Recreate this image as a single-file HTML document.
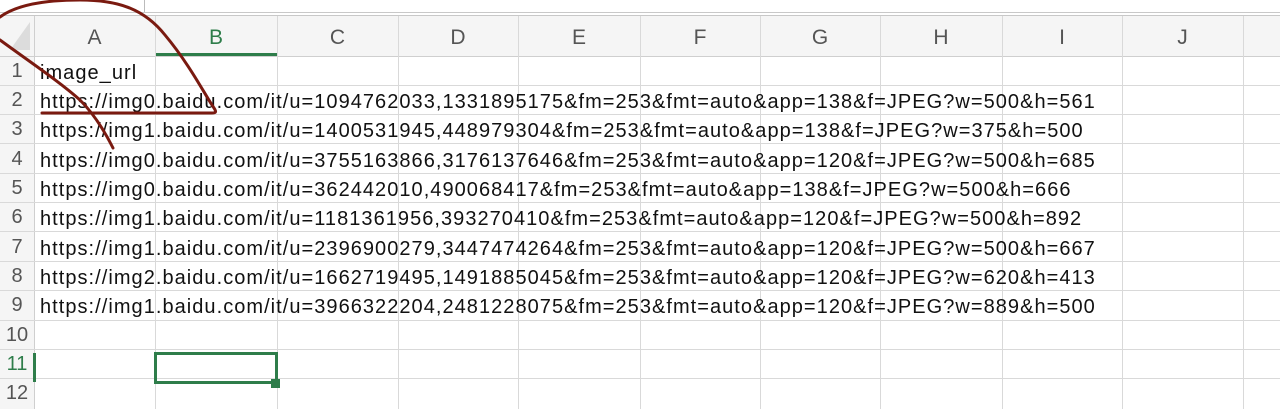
<!DOCTYPE html>
<html><head><meta charset="utf-8"><style>
body{margin:0;width:1280px;height:409px;overflow:hidden;background:#fff;font-family:"Liberation Sans",sans-serif;position:relative}
.a{position:absolute}
.vl{position:absolute;width:1px;background:#d9d9d9}
.hl{position:absolute;height:1px;background:#d9d9d9;left:0;width:1280px}
.ch{position:absolute;top:17px;height:39px;line-height:42px;text-align:center;font-size:21px;color:#555}
.rh{position:absolute;left:0;width:34px;text-align:center;font-size:20px;color:#555}
.t{position:absolute;left:40px;font-size:20px;letter-spacing:1.04px;color:#111;white-space:nowrap}
</style></head><body>
<div class="a" style="left:0;top:0;width:1280px;height:12px;background:#fff"></div>
<div class="a" style="left:144px;top:0;width:1px;height:12px;background:#bbb"></div>
<div class="a" style="left:0;top:12px;width:1280px;height:1px;background:#c8c8c8"></div>
<div class="a" style="left:0;top:15px;width:1280px;height:1px;background:#c8c8c8"></div>
<div class="a" style="left:0;top:16px;width:1280px;height:40px;background:#f5f5f5"></div>
<div class="a" style="left:0;top:56px;width:34px;height:353px;background:#f5f5f5"></div>
<svg class="a" style="left:8px;top:20px" width="24" height="32"><polygon points="22,2 22,30 2,30" fill="#dcdcdc"/></svg>
<div class="hl" style="top:56px;background:#cfcfcf"></div>
<div class="a" style="left:155px;top:53px;width:122px;height:3px;background:#2e7d4a"></div>
<div class="vl" style="left:34px;top:16px;height:393px;background:#cfcfcf"></div>
<div class="vl" style="left:155px;top:16px;height:393px"></div>
<div class="vl" style="left:277px;top:16px;height:393px"></div>
<div class="vl" style="left:398px;top:16px;height:393px"></div>
<div class="vl" style="left:518px;top:16px;height:393px"></div>
<div class="vl" style="left:640px;top:16px;height:393px"></div>
<div class="vl" style="left:760px;top:16px;height:393px"></div>
<div class="vl" style="left:880px;top:16px;height:393px"></div>
<div class="vl" style="left:1002px;top:16px;height:393px"></div>
<div class="vl" style="left:1122px;top:16px;height:393px"></div>
<div class="vl" style="left:1243px;top:16px;height:393px"></div>
<div class="ch" style="left:34px;width:121px">A</div>
<div class="ch" style="left:155px;width:122px;color:#2e7d4a">B</div>
<div class="ch" style="left:277px;width:121px">C</div>
<div class="ch" style="left:398px;width:120px">D</div>
<div class="ch" style="left:518px;width:122px">E</div>
<div class="ch" style="left:640px;width:120px">F</div>
<div class="ch" style="left:760px;width:120px">G</div>
<div class="ch" style="left:880px;width:122px">H</div>
<div class="ch" style="left:1002px;width:120px">I</div>
<div class="ch" style="left:1122px;width:121px">J</div>
<div class="hl" style="top:85px"></div><div class="hl" style="top:114px"></div><div class="hl" style="top:143px"></div><div class="hl" style="top:173px"></div><div class="hl" style="top:202px"></div><div class="hl" style="top:231px"></div><div class="hl" style="top:261px"></div><div class="hl" style="top:290px"></div><div class="hl" style="top:320px"></div><div class="hl" style="top:349px"></div><div class="hl" style="top:378px"></div>
<div class="rh" style="top:60px">1</div><div class="rh" style="top:89px">2</div><div class="rh" style="top:118px">3</div><div class="rh" style="top:148px">4</div><div class="rh" style="top:177px">5</div><div class="rh" style="top:206px">6</div><div class="rh" style="top:236px">7</div><div class="rh" style="top:265px">8</div><div class="rh" style="top:294px">9</div><div class="rh" style="top:324px">10</div><div class="rh" style="top:353px;color:#2e7d4a">11</div><div class="rh" style="top:382px">12</div>
<div class="a" style="left:33px;top:353px;width:3px;height:29px;background:#2e7d4a"></div>
<div class="t" style="top:62px">image_url</div>
<div class="t" style="top:91px">https://img0.baidu.com/it/u=1094762033,1331895175&amp;fm=253&amp;fmt=auto&amp;app=138&amp;f=JPEG?w=500&amp;h=561</div>
<div class="t" style="top:120px">https://img1.baidu.com/it/u=1400531945,448979304&amp;fm=253&amp;fmt=auto&amp;app=138&amp;f=JPEG?w=375&amp;h=500</div>
<div class="t" style="top:150px">https://img0.baidu.com/it/u=3755163866,3176137646&amp;fm=253&amp;fmt=auto&amp;app=120&amp;f=JPEG?w=500&amp;h=685</div>
<div class="t" style="top:179px">https://img0.baidu.com/it/u=362442010,490068417&amp;fm=253&amp;fmt=auto&amp;app=138&amp;f=JPEG?w=500&amp;h=666</div>
<div class="t" style="top:208px">https://img1.baidu.com/it/u=1181361956,393270410&amp;fm=253&amp;fmt=auto&amp;app=120&amp;f=JPEG?w=500&amp;h=892</div>
<div class="t" style="top:238px">https://img1.baidu.com/it/u=2396900279,3447474264&amp;fm=253&amp;fmt=auto&amp;app=120&amp;f=JPEG?w=500&amp;h=667</div>
<div class="t" style="top:267px">https://img2.baidu.com/it/u=1662719495,1491885045&amp;fm=253&amp;fmt=auto&amp;app=120&amp;f=JPEG?w=620&amp;h=413</div>
<div class="t" style="top:296px">https://img1.baidu.com/it/u=3966322204,2481228075&amp;fm=253&amp;fmt=auto&amp;app=120&amp;f=JPEG?w=889&amp;h=500</div>
<div class="a" style="left:154px;top:352px;width:118px;height:26px;border:3px solid #2e7d4a"></div>
<div class="a" style="left:271px;top:379px;width:9px;height:9px;background:#2e7d4a"></div>
<svg class="a" style="left:0;top:0" width="300" height="160">
<path d="M0,17 C15,6 40,0 80,0 C120,0 145,10 165,35 C190,65 205,95 214,108 C218,114 214,113 205,113 L42,113" fill="none" stroke="#7a1a10" stroke-width="3" stroke-linecap="round"/>
<path d="M0,40 C30,62 60,82 80,100 C95,115 105,132 113,148" fill="none" stroke="#7a1a10" stroke-width="3" stroke-linecap="round"/>
</svg>
</body></html>
